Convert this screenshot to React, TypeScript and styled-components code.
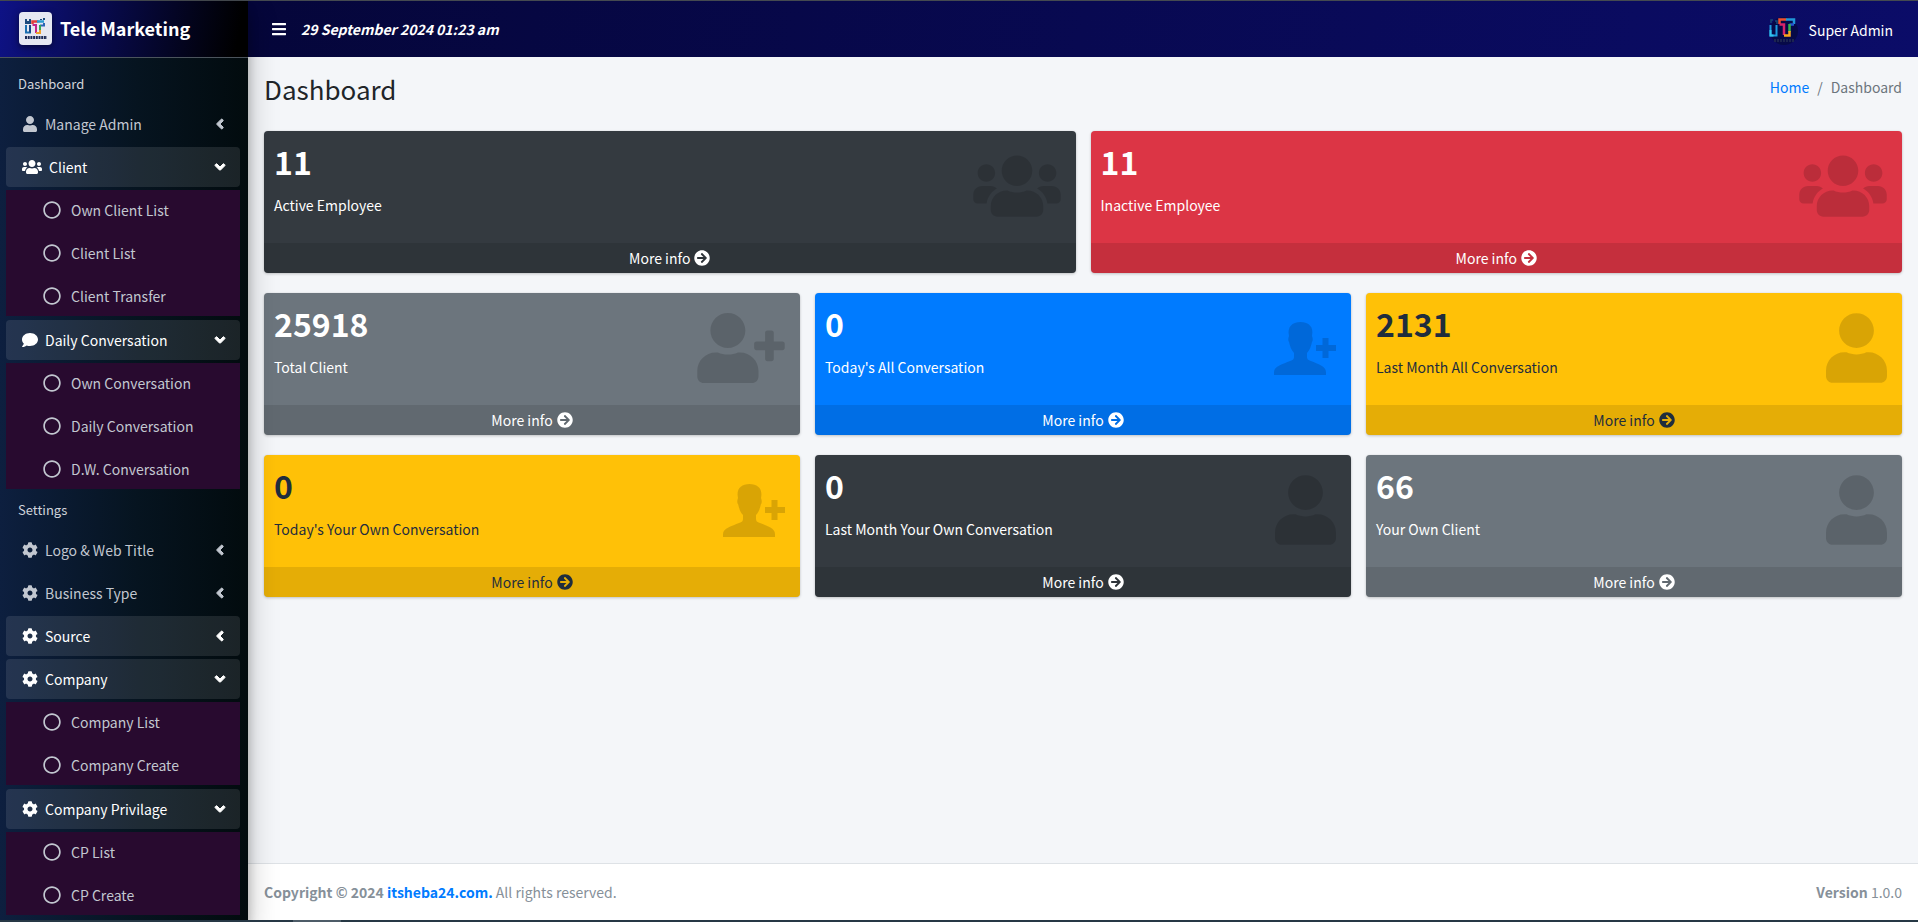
import React from "react";
import styled, { createGlobalStyle } from "styled-components";
import { FaBars, FaUser, FaUsers, FaComment, FaCog, FaAngleLeft, FaAngleDown, FaRegCircle, FaArrowCircleRight, FaUserPlus } from "react-icons/fa";

const sans = `"Source Sans Pro", "Noto Sans CJK JP", "Noto Sans", sans-serif`;

const GlobalStyle = createGlobalStyle`
  *, *::before, *::after { box-sizing: border-box; }
  body { margin: 0; background: #f4f6f9; font: 400 14px/24px ${sans}; color: #212529; }
  a { color: #007bff; text-decoration: none; }
  ul, ol, p, h1, h3 { margin: 0; padding: 0; list-style: none; }
`;

const Page = styled.div`
  min-height: 100vh;
  display: flex;
  flex-direction: column;
  border-top: 1px solid #454a50;
`;

const Shell = styled.div`
  flex: 1;
  display: grid;
  grid-template-columns: 248px minmax(0, 1fr);
`;

const Sidebar = styled.aside`
  z-index: 2;
  background: linear-gradient(90deg, #0d1f3f 0%, #061420 55%, #020b0e 100%);
  box-shadow: 0 14px 28px rgba(0, 0, 0, 0.25), 0 10px 10px rgba(0, 0, 0, 0.22);
`;

const Brand = styled.a`
  display: flex;
  align-items: center;
  gap: 8px;
  height: 57px;
  padding: 0 19px 2px;
  border-bottom: 1px solid #4b545c;
  background: linear-gradient(100deg, #0e1286 0%, #000 95%);
  color: #fff;
  font-size: 18px;
  font-weight: 700;
  svg { flex: none; filter: drop-shadow(0 2px 3px rgba(0, 0, 0, 0.5)); }
`;

const Nav = styled.nav`
  padding: 9px 8px 0 6px;
`;

const NavHeader = styled.li`
  padding: 5px 12px 8px;
  font-size: 13px;
  color: #d0d4db;
`;

const NavLink = styled.a<{ $active?: boolean }>`
  display: flex;
  align-items: center;
  gap: 7px;
  height: 40px;
  margin-bottom: 3px;
  padding: 0 12px 0 16px;
  border-radius: 4px;
  background: ${(p) => (p.$active ? "rgba(255, 255, 255, 0.1)" : "transparent")};
  color: ${(p) => (p.$active ? "#fff" : "#c2c7d0")};
  span { flex: 1; }
  span + svg { stroke: currentColor; stroke-width: 32px; }
`;

const SubMenu = styled.ul`
  margin-bottom: 4px;
  background: #280a2f;
`;

const SubLink = styled.a`
  display: flex;
  align-items: center;
  gap: 10px;
  height: 40px;
  padding-left: 37px;
  color: #c2c7d0;
  li + li > & { margin-top: 3px; }
`;

const Main = styled.div`
  display: flex;
  flex-direction: column;
`;

const TopBar = styled.header`
  display: flex;
  align-items: center;
  justify-content: space-between;
  height: 56px;
  padding: 0 25px 0 23px;
  background: linear-gradient(100deg, #05063a, #0b0c68);
  color: #fff;
`;

const TopGroup = styled.div`
  display: flex;
  align-items: center;
  gap: 14px;
`;

const IconButton = styled.button`
  display: flex;
  padding: 0;
  border: 0;
  background: none;
  color: #fff;
`;

const Clock = styled.time`
  font-style: italic;
  font-weight: 700;
`;

const Account = styled.a`
  display: flex;
  align-items: center;
  gap: 10px;
  padding-top: 2px;
  color: #fff;
`;

const TitleRow = styled.div`
  display: flex;
  justify-content: space-between;
  padding: 14px 16px 25px;
`;

const Title = styled.h1`
  font-size: 26px;
  font-weight: 400;
  line-height: 35px;
`;

const Crumbs = styled.ol`
  display: flex;
  gap: 8px;
  padding-top: 4px;
  color: #6c757d;
`;

const Content = styled.main`
  flex: 1;
  display: flex;
  flex-direction: column;
  gap: 20px;
  padding: 0 16px 20px;
`;

const CardRow = styled.section<{ $columns: number }>`
  display: grid;
  grid-template-columns: repeat(${(p) => p.$columns}, minmax(0, 1fr));
  gap: 15px;
`;

const tones = {
  dark: ["#343a40", "#fff"],
  danger: ["#dc3545", "#fff"],
  secondary: ["#6c757d", "#fff"],
  primary: ["#007bff", "#fff"],
  warning: ["#ffc107", "#1f2d3d"],
};
type Tone = keyof typeof tones;

const Card = styled.article<{ $tone: Tone }>`
  overflow: hidden;
  border-radius: 4px;
  box-shadow: 0 0 1px rgba(0, 0, 0, 0.125), 0 1px 3px rgba(0, 0, 0, 0.2);
  background: ${(p) => tones[p.$tone][0]};
  color: ${(p) => tones[p.$tone][1]};
`;

const CardBody = styled.div`
  display: flex;
  justify-content: space-between;
  height: 112px;
  padding: 10px 15px 10px 10px;
`;

const Figure = styled.h3`
  margin-bottom: 12px;
  font-size: 32px;
  font-weight: 700;
  line-height: 40px;
`;

const CardIcon = styled.div<{ $width: number }>`
  padding-top: 10px;
  color: rgba(0, 0, 0, 0.15);
  svg { display: block; width: ${(p) => p.$width}px; height: 70px; }
`;

const CardLink = styled.a`
  display: flex;
  align-items: center;
  justify-content: center;
  gap: 4px;
  height: 30px;
  background: rgba(0, 0, 0, 0.1);
  color: inherit;
`;

const Footer = styled.footer`
  display: flex;
  justify-content: space-between;
  padding: 16px;
  border-top: 1px solid #dee2e6;
  background: #fff;
  color: #869099;
`;

const BottomStrip = styled.div`
  z-index: 3;
  height: 2px;
  padding-left: 293px;
  background: #263845;
  &::before { content: ""; display: block; width: 48px; height: 2px; background: #4d5c68; }
`;

const BrandLogo = () => (
  <svg width="33" height="33" viewBox="0 0 33 33" aria-hidden="true">
    <rect width="33" height="33" rx="4" fill="#e6e8f2" />
    <path d="M6 7h2v2h2V7h2v5H6z" fill="#1d4a7c" />
    <path d="M7 13v7.500h4V13" fill="none" stroke="#1b6fb0" strokeWidth="2" />
    <path d="M11 13v7.500" stroke="#173a78" strokeWidth="1.500" />
    <path d="M13.500 12V9.500h6" fill="none" stroke="#e0403a" strokeWidth="2.500" />
    <path d="M18 9.500h7" stroke="#2a9bd0" strokeWidth="2.500" />
    <path d="M24 6h2v2h-2zM21 7h2v1h-2z" fill="#1d4a7c" />
    <path d="M13.500 13H17v8" fill="none" stroke="#c2258a" strokeWidth="2" />
    <path d="M25 11v2.500h-4" fill="none" stroke="#2b64b5" strokeWidth="2" />
    <path d="M21 13v5" stroke="#35a853" strokeWidth="2" />
    <path d="M17 21h4v-3" fill="none" stroke="#f0a02c" strokeWidth="2" />
    <path d="M6 25.500h22" stroke="#1c2a55" strokeWidth="3" strokeDasharray="2 .7" />
  </svg>
);

const Avatar = () => (
  <svg width="30" height="30" viewBox="0 0 30 30" aria-hidden="true">
    <circle cx="15" cy="16" r="14" fill="#070a48" />
    <path d="M2 8V5h2M6 6h2v3" fill="none" stroke="#174a78" strokeWidth="1.500" />
    <path d="M1.500 10v10.500h6V10" fill="none" stroke="#1c9be0" strokeWidth="2" />
    <path d="M1.500 15v5.500h3" fill="none" stroke="#33c3ee" strokeWidth="2" />
    <path d="M10.500 9V4.500h7" fill="none" stroke="#f0512d" strokeWidth="2.500" />
    <path d="M17 4.500h8V9" fill="none" stroke="#2198d8" strokeWidth="2.500" />
    <path d="M10.500 9.500H15V20" fill="none" stroke="#d8246a" strokeWidth="2.500" />
    <path d="M25 9.500h-4.500" stroke="#2458d0" strokeWidth="2.500" />
    <path d="M20.500 9v8" stroke="#39b54a" strokeWidth="2.500" />
    <path d="M15 20.500h5.500V16" fill="none" stroke="#fba61c" strokeWidth="2.500" />
    <path d="M5 25.500h20" stroke="#1c2450" strokeWidth="3" strokeDasharray="2 1" />
  </svg>
);

const PersonAdd = () => (
  <svg width="62" height="70" viewBox="0 0 62 70" fill="currentColor" aria-hidden="true">
    <path d="M0 62V59C0 53 9 51 16 48C19 47 20 46 20 44V40C17 37 16 33 15 29C14 28 14 25 15 23C13 14 18 9 26.500 9S40 14 38 23C39 25 39 28 38 29C37 33 36 37 33 40V44C33 46 34 47 37 48C44 51 52 53 52 59V62Z" />
    <path d="M48.500 25h6v7h7.500v6h-7.500v7h-6v-7H42v-6h6.500z" />
  </svg>
);

const icons = {
  users: { glyph: <FaUsers />, width: 88 },
  userPlus: { glyph: <FaUserPlus />, width: 88 },
  user: { glyph: <FaUser />, width: 61 },
  personAdd: { glyph: <PersonAdd />, width: 62 },
};

type CardData = { value: string; label: string; tone: Tone; icon: keyof typeof icons };

const rows: CardData[][] = [
  [
    { value: "11", label: "Active Employee", tone: "dark", icon: "users" },
    { value: "11", label: "Inactive Employee", tone: "danger", icon: "users" },
  ],
  [
    { value: "25918", label: "Total Client", tone: "secondary", icon: "userPlus" },
    { value: "0", label: "Today's All Conversation", tone: "primary", icon: "personAdd" },
    { value: "2131", label: "Last Month All Conversation", tone: "warning", icon: "user" },
  ],
  [
    { value: "0", label: "Today's Your Own Conversation", tone: "warning", icon: "personAdd" },
    { value: "0", label: "Last Month Your Own Conversation", tone: "dark", icon: "user" },
    { value: "66", label: "Your Own Client", tone: "secondary", icon: "user" },
  ],
];

type Item = { label: string; icon: React.ReactNode; active?: boolean; children?: string[] };
const cog = <FaCog size={16} />;

const menu: { header: string; items: Item[] }[] = [
  {
    header: "Dashboard",
    items: [
      { label: "Manage Admin", icon: <FaUser size={16} /> },
      { label: "Client", icon: <FaUsers size={20} />, active: true, children: ["Own Client List", "Client List", "Client Transfer"] },
      { label: "Daily Conversation", icon: <FaComment size={16} />, active: true, children: ["Own Conversation", "Daily Conversation", "D.W. Conversation"] },
    ],
  },
  {
    header: "Settings",
    items: [
      { label: "Logo & Web Title", icon: cog },
      { label: "Business Type", icon: cog },
      { label: "Source", icon: cog, active: true },
      { label: "Company", icon: cog, active: true, children: ["Company List", "Company Create"] },
      { label: "Company Privilage", icon: cog, active: true, children: ["CP List", "CP Create"] },
    ],
  },
];

export default function App() {
  return (
    <>
      <GlobalStyle />
      <Page>
        <Shell>
          <Sidebar>
            <Brand href="#"><BrandLogo />Tele Marketing</Brand>
            <Nav>
              <ul>
                {menu.map((group) => (
                  <React.Fragment key={group.header}>
                    <NavHeader>{group.header}</NavHeader>
                    {group.items.map((item) => (
                      <li key={item.label}>
                        <NavLink href="#" $active={item.active}>
                          {item.icon}
                          <span>{item.label}</span>
                          {item.children ? <FaAngleDown size={16} /> : <FaAngleLeft size={16} />}
                        </NavLink>
                        {item.children && (
                          <SubMenu>
                            {item.children.map((child) => (
                              <li key={child}><SubLink href="#"><FaRegCircle size={18} />{child}</SubLink></li>
                            ))}
                          </SubMenu>
                        )}
                      </li>
                    ))}
                  </React.Fragment>
                ))}
              </ul>
            </Nav>
          </Sidebar>
          <Main>
            <TopBar>
              <TopGroup>
                <IconButton aria-label="Toggle menu"><FaBars size={16} /></IconButton>
                <Clock>29 September 2024 01:23 am</Clock>
              </TopGroup>
              <Account href="#"><Avatar />Super Admin</Account>
            </TopBar>
            <TitleRow>
              <Title>Dashboard</Title>
              <Crumbs>
                <li><a href="#">Home</a></li>
                <li>/</li>
                <li>Dashboard</li>
              </Crumbs>
            </TitleRow>
            <Content>
              {rows.map((cards, i) => (
                <CardRow key={i} $columns={cards.length}>
                  {cards.map((card) => (
                    <Card key={card.label} $tone={card.tone}>
                      <CardBody>
                        <div>
                          <Figure>{card.value}</Figure>
                          <p>{card.label}</p>
                        </div>
                        <CardIcon $width={icons[card.icon].width}>{icons[card.icon].glyph}</CardIcon>
                      </CardBody>
                      <CardLink href="#">More info <FaArrowCircleRight size={16} /></CardLink>
                    </Card>
                  ))}
                </CardRow>
              ))}
            </Content>
            <Footer>
              <div><strong>Copyright © 2024 <a href="#">itsheba24.com.</a></strong> All rights reserved.</div>
              <div><strong>Version</strong> 1.0.0</div>
            </Footer>
          </Main>
        </Shell>
        <BottomStrip />
      </Page>
    </>
  );
}
